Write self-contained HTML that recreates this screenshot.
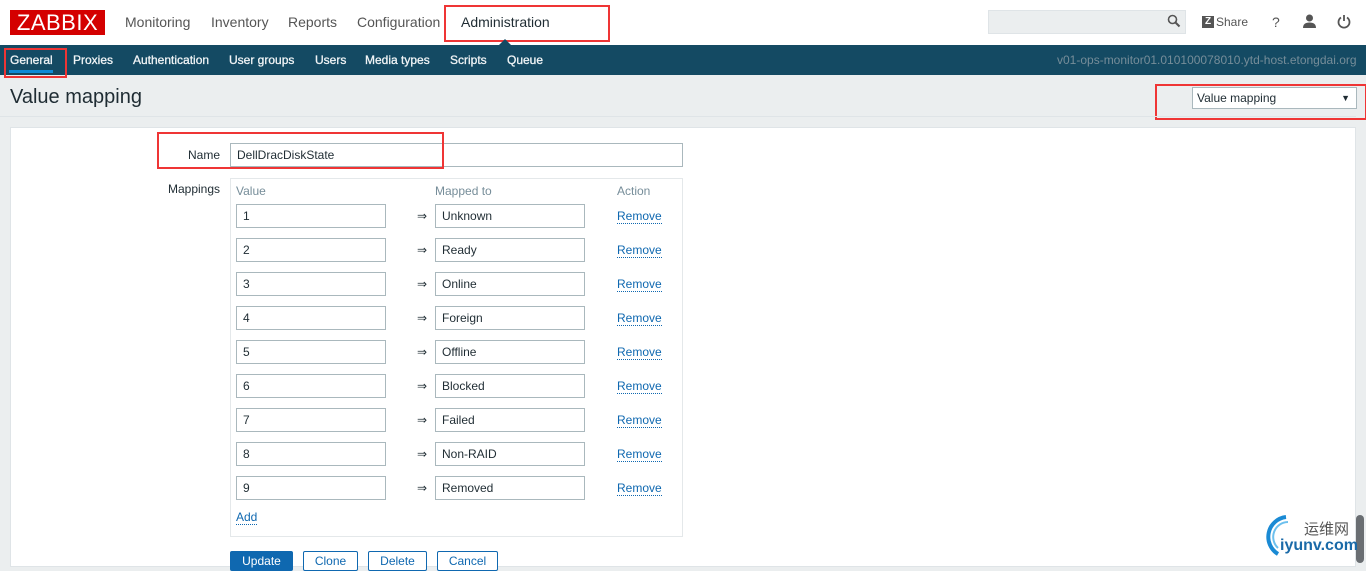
<!DOCTYPE html>
<html><head><meta charset="utf-8"><style>
*{box-sizing:border-box;margin:0;padding:0}
body{width:1366px;height:563px;overflow:hidden;background:#ebeeef;font-family:"Liberation Sans",Arial,sans-serif;font-size:12px;color:#1f2c33;position:relative}
.a{position:absolute}
.top{left:0;top:0;width:1366px;height:45px;background:#fff}
.logo{left:10px;top:10px;width:95px;height:25px;background:#d40000;color:#fff;font-size:22px;line-height:25px;text-align:center;letter-spacing:0.5px}
.mm{top:14px;font-size:14px;color:#555}
.nav{left:0;top:45px;width:1366px;height:30px;background:#144a63}
.sm{top:53px;font-size:12px;color:#f0f4f6;-webkit-text-stroke:0.3px #f0f4f6}
.red{border:2px solid #ef3535}
.inp{background:#fff;border:1px solid #aab8bd;height:24px;line-height:22px;padding-left:6px;font-size:12px}
.rm{color:#0f68b0;border-bottom:1px dotted #0f68b0;line-height:13px}
.btn{top:551px;height:20px;border:1px solid #0f68b0;background:#fff;color:#0f68b0;font-size:12px;text-align:center;line-height:18px;border-radius:2px}
</style></head><body>
<div class="a top"></div>
<div class="a logo">ZABBIX</div>
<div class="a mm" style="left:125px">Monitoring</div>
<div class="a mm" style="left:211px">Inventory</div>
<div class="a mm" style="left:288px">Reports</div>
<div class="a mm" style="left:357px">Configuration</div>
<div class="a mm" style="left:461px;color:#1f2c33">Administration</div>
<div class="a red" style="left:444px;top:5px;width:166px;height:37px"></div>
<div class="a" style="left:988px;top:10px;width:198px;height:24px;background:#ebeeef;border:1px solid #dfe4e7"></div>
<svg class="a" style="left:1167px;top:14px" width="14" height="14"><circle cx="5.5" cy="5.5" r="4" fill="none" stroke="#555" stroke-width="1.6"/><path d="M8.5 8.5L12.5 12.5" stroke="#555" stroke-width="2"/></svg>
<div class="a" style="left:1202px;top:16px;width:12px;height:12px;background:#555;color:#fff;font-size:10px;font-weight:bold;line-height:12px;text-align:center">Z</div>
<div class="a" style="left:1216px;top:15px;color:#555;font-size:12px">Share</div>
<div class="a" style="left:1272px;top:14px;color:#555;font-size:14px">?</div>
<svg class="a" style="left:1302px;top:14px" width="15" height="15"><circle cx="7.5" cy="4" r="3.5" fill="#555"/><path d="M1 14Q1 8.5 7.5 8.5T14 14Z" fill="#555"/></svg>
<svg class="a" style="left:1337px;top:14px" width="14" height="15"><path d="M4 3.5A5.5 5.5 0 1 0 10 3.5" fill="none" stroke="#555" stroke-width="1.8"/><path d="M7 1V7" stroke="#555" stroke-width="1.8"/></svg>
<div class="a nav"></div>
<svg class="a" style="left:498px;top:38px" width="14" height="8"><path d="M0 8L7 1L14 8Z" fill="#144a63"/></svg>
<div class="a sm" style="left:10px">General</div>
<div class="a" style="left:9px;top:70px;width:44px;height:3px;background:#0f8ad8"></div>
<div class="a red" style="left:4px;top:48px;width:63px;height:30px"></div>
<div class="a sm" style="left:73px">Proxies</div>
<div class="a sm" style="left:133px">Authentication</div>
<div class="a sm" style="left:229px">User groups</div>
<div class="a sm" style="left:315px">Users</div>
<div class="a sm" style="left:365px">Media types</div>
<div class="a sm" style="left:450px">Scripts</div>
<div class="a sm" style="left:507px">Queue</div>
<div class="a" style="left:1057px;top:53px;color:#768d99;font-size:12px">v01-ops-monitor01.010100078010.ytd-host.etongdai.org</div>
<div class="a" style="left:10px;top:86px;font-size:20px;color:#1f2c33">Value mapping</div>
<div class="a" style="left:1192px;top:87px;width:165px;height:22px;background:#fff;border:1px solid #aab8bd;padding-left:4px;line-height:20px">Value mapping<span style="position:absolute;right:6px;font-size:9px">▼</span></div>
<div class="a red" style="left:1155px;top:84px;width:212px;height:36px"></div>
<div class="a" style="left:0;top:116px;width:1356px;height:1px;background:#dfe4e7"></div>
<div class="a" style="left:10px;top:127px;width:1346px;height:440px;background:#fff;border:1px solid #dfe4e7"></div>
<div class="a" style="left:188px;top:148px">Name</div>
<div class="a inp" style="left:230px;top:143px;width:453px">DellDracDiskState</div>
<div class="a red" style="left:157px;top:132px;width:287px;height:37px"></div>
<div class="a" style="left:168px;top:182px">Mappings</div>
<div class="a" style="left:230px;top:178px;width:453px;height:359px;border:1px solid #e4e8ea"></div>
<div class="a" style="left:236px;top:184px;color:#768d99">Value</div>
<div class="a" style="left:435px;top:184px;color:#768d99">Mapped to</div>
<div class="a" style="left:617px;top:184px;color:#768d99">Action</div>
<div id="rows"></div>
<div class="a rm" style="left:236px;top:511px">Add</div>
<div class="a btn" style="left:230px;background:#0f68b0;color:#fff;width:63px">Update</div>
<div class="a btn" style="left:303px;width:55px">Clone</div>
<div class="a btn" style="left:368px;width:59px">Delete</div>
<div class="a btn" style="left:437px;width:61px">Cancel</div>
<div class="a" style="left:1356px;top:515px;width:8px;height:48px;background:#6a6e72;border-radius:4px"></div>
<svg class="a" style="left:1262px;top:514px" width="40" height="45"><path d="M24 3A20 20 0 0 0 16 40" fill="none" stroke="#1a8ad4" stroke-width="4"/><path d="M26 8A15 15 0 0 0 16 34" fill="none" stroke="#6cc0ee" stroke-width="2"/></svg>
<div class="a" style="left:1304px;top:518px;font-family:'Noto Sans CJK SC',sans-serif;font-size:15px;color:#555">运维网</div>
<div class="a" style="left:1280px;top:537px;font-size:16px;font-weight:bold;color:#1a6aa8">iyunv.com</div>
<script>
var m=["Unknown","Ready","Online","Foreign","Offline","Blocked","Failed","Non-RAID","Removed"],h="";
for(var i=0;i<9;i++){var y=204+i*34;
h+='<div class="a inp" style="left:236px;top:'+y+'px;width:150px">'+(i+1)+'</div>'+
'<div class="a" style="left:417px;top:'+(y+5)+'px">&rArr;</div>'+
'<div class="a inp" style="left:435px;top:'+y+'px;width:150px">'+m[i]+'</div>'+
'<div class="a rm" style="left:617px;top:'+(y+6)+'px">Remove</div>';}
document.getElementById("rows").innerHTML=h;
</script>
</body></html>
